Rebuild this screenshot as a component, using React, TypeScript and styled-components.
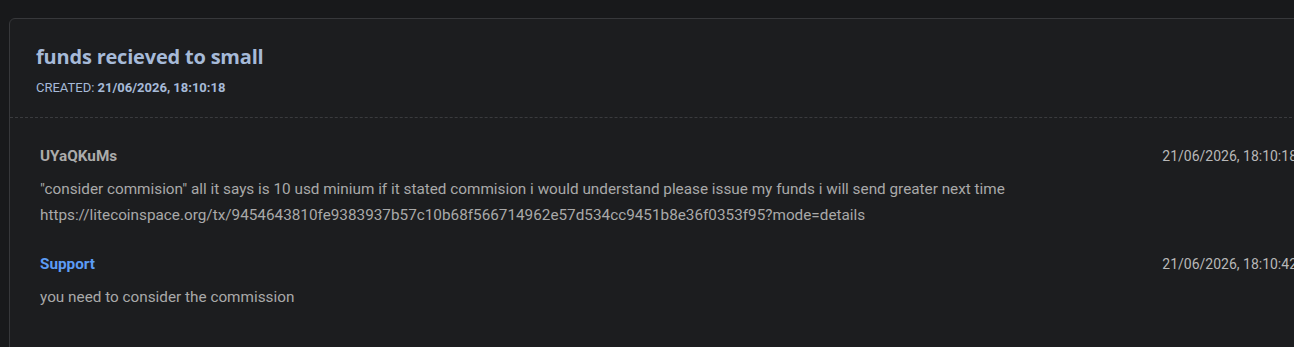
import React from "react";
import styled, { createGlobalStyle } from "styled-components";

const Global = createGlobalStyle`
  html, body { margin: 0; padding: 0; background: #18191b; overflow: hidden; }
  body { font-family: Roboto, "Liberation Sans", sans-serif; }
`;

const Page = styled.div`
  padding: 18px 0 0 9px;
  width: 1380px;
  box-sizing: border-box;
`;

const Card = styled.section`
  width: 1317px;
  background: #1c1d1f;
  border: 1px solid #37383b;
  border-radius: 6px;
  min-height: 340px;
`;

const Header = styled.header`
  padding: 24px 26px 20px;
  border-bottom: 1px dashed #3a3b3e;
`;

const Title = styled.h1`
  margin: 0;
  font-family: "Open Sans", "Noto Sans", sans-serif;
  font-weight: 700;
  font-size: 20px;
  line-height: 28px;
  color: #a6bad8;
  letter-spacing: -0.2px;
`;

const Meta = styled.div`
  margin-top: 8px;
  font-size: 13px;
  line-height: 18px;
  color: #a6bad8;
  b { font-weight: 700; }
`;

const Thread = styled.div`
  padding: 27px 30px 0;
  display: flex;
  flex-direction: column;
  gap: 25px;
`;

const Message = styled.article``;

const MsgHead = styled.div`
  display: flex;
  justify-content: space-between;
  align-items: center;
  height: 22px;
`;

const Author = styled.span<{ $staff?: boolean }>`
  font-size: 15.3px;
  font-weight: 700;
  color: ${(p) => (p.$staff ? "#5c9cf5" : "#ababab")};
`;

const Stamp = styled.span`
  font-size: 14px;
  color: #b8b8b8;
`;

const Body = styled.p`
  margin: 9px 0 0;
  font-size: 15.3px;
  line-height: 26px;
  color: #a9a9a9;
`;

export default function App() {
  return (
    <>
      <Global />
      <Page>
        <Card>
          <Header>
            <Title>funds recieved to small</Title>
            <Meta>
              CREATED: <b>21/06/2026, 18:10:18</b>
            </Meta>
          </Header>
          <Thread>
            <Message>
              <MsgHead>
                <Author>UYaQKuMs</Author>
                <Stamp>21/06/2026, 18:10:18</Stamp>
              </MsgHead>
              <Body>
                "consider commision" all it says is 10 usd minium if it stated commision i would understand please issue my funds i will send greater next time
                <br />
                https://litecoinspace.org/tx/9454643810fe9383937b57c10b68f566714962e57d534cc9451b8e36f0353f95?mode=details
              </Body>
            </Message>
            <Message>
              <MsgHead>
                <Author $staff>Support</Author>
                <Stamp>21/06/2026, 18:10:42</Stamp>
              </MsgHead>
              <Body>you need to consider the commission</Body>
            </Message>
          </Thread>
        </Card>
      </Page>
    </>
  );
}
